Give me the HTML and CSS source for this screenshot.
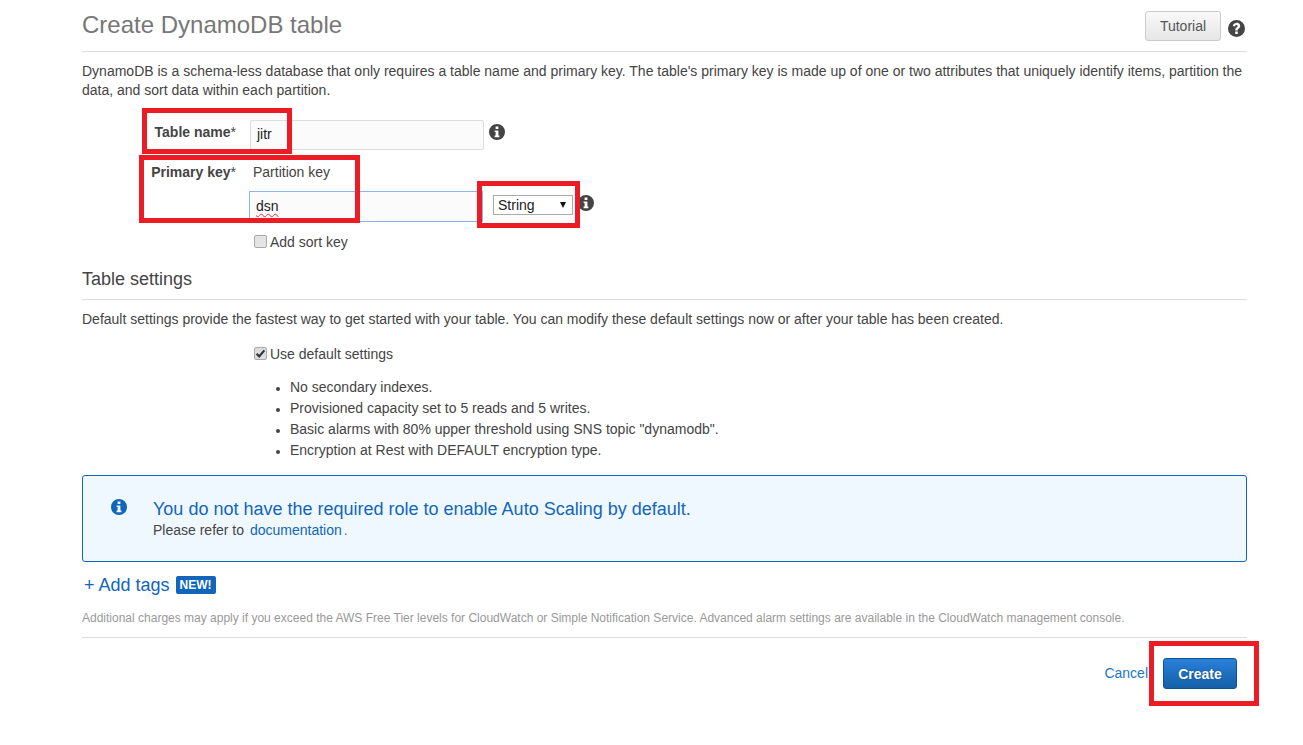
FILE: index.html
```html
<!DOCTYPE html>
<html lang="en">
<head>
<meta charset="utf-8">
<title>Create DynamoDB table</title>
<link rel="stylesheet" href="styles.css">
</head>
<body>
<svg class="sprites" width="0" height="0" aria-hidden="true">
  <symbol id="info" viewBox="0 0 16 16"><path fill-rule="evenodd" d="M8 0a8 8 0 1 1 0 16A8 8 0 0 1 8 0zM6.600 2.600v2.500h2.800V2.600zM5.600 6.400v1.700h1v3.300h-1v1.900h4.800v-1.900h-1V6.400z"/></symbol>
  <symbol id="help" viewBox="0 0 16 16"><path fill-rule="evenodd" d="M8 0a8 8 0 1 1 0 16A8 8 0 0 1 8 0zM6.800 10.900v2.300h2.400v-2.300zM8 2.800c-1.900 0-3.200 1-3.500 2.800l2.200.4c.1-.8.6-1.200 1.200-1.200.7 0 1.100.4 1.100 1 0 .5-.3.8-.9 1.300-.9.7-1.300 1.300-1.300 2.400v.3h2.300v-.2c0-.6.2-.9.9-1.400.9-.7 1.500-1.400 1.500-2.500 0-1.900-1.500-3.300-3.600-3.300z"/></symbol>
</svg>
<main class="page">
  <header class="title-bar">
    <h1 class="title">Create DynamoDB table</h1>
    <button class="btn-tutorial" type="button">Tutorial</button>
    <svg class="icon icon-help"><use href="#help"/></svg>
  </header>
  <p class="intro">DynamoDB is a schema-less database that only requires a table name and primary key. The table's primary key is made up of one or two attributes that uniquely identify items, partition the data, and sort data within each partition.</p>

  <section class="form">
    <div class="label label-name"><b>Table name</b>*</div>
    <div class="row-name">
      <div class="text-input">jitr</div>
      <svg class="icon"><use href="#info"/></svg>
    </div>
    <div class="label label-key"><b>Primary key</b>*</div>
    <div class="key-col">
      <div class="key-caption">Partition key</div>
      <div class="row-key">
        <div class="text-input focused"><span class="squiggle">dsn</span></div>
        <div class="select"><span>String</span><i class="caret"></i></div>
        <svg class="icon"><use href="#info"/></svg>
      </div>
      <label class="check sort-check"><span class="box"></span>Add sort key</label>
    </div>
  </section>

  <h2 class="section-title">Table settings</h2>
  <p class="settings-text">Default settings provide the fastest way to get started with your table. You can modify these default settings now or after your table has been created.</p>

  <div class="defaults">
    <label class="check"><span class="box checked"><svg viewBox="0 0 12 12"><path d="M1.800 6.200 4.600 9.200 10.200 2.600" fill="none" stroke="#333" stroke-width="2.400"/></svg></span>Use default settings</label>
    <ul class="default-list">
      <li>No secondary indexes.</li>
      <li>Provisioned capacity set to 5 reads and 5 writes.</li>
      <li>Basic alarms with 80% upper threshold using SNS topic "dynamodb".</li>
      <li>Encryption at Rest with DEFAULT encryption type.</li>
    </ul>
  </div>

  <div class="notice">
    <svg class="icon notice-icon"><use href="#info"/></svg>
    <div>
      <div class="notice-title">You do not have the required role to enable Auto Scaling by default.</div>
      <div class="notice-text">Please refer to <a class="link" href="#">documentation</a><span class="dot">.</span></div>
    </div>
  </div>

  <div class="tags"><a class="tags-link" href="#">+ Add tags</a><span class="badge">NEW!</span></div>
  <p class="charges">Additional charges may apply if you exceed the AWS Free Tier levels for CloudWatch or Simple Notification Service. Advanced alarm settings are available in the CloudWatch management console.</p>

  <footer class="actions">
    <a class="cancel" href="#">Cancel</a>
    <button class="btn-create" type="button">Create</button>
  </footer>
</main>
<div class="mark mark-1"></div>
<div class="mark mark-2"></div>
<div class="mark mark-3"></div>
<div class="mark mark-4"></div>
</body>
</html>
```

FILE: styles.css
```css
* { box-sizing: border-box; }
html, body { margin: 0; background: #fff; }
body {
  position: relative;
  height: 745px;
  overflow: hidden;
  font-family: "Liberation Sans", Arial, sans-serif;
  font-size: 14px;
  line-height: 19px;
  color: #444;
}
.sprites { position: absolute; }
.page { width: 1247px; padding: 10px 0 0 82px; }
.icon { width: 16px; height: 16px; fill: #444; flex: none; display: block; }

.title-bar {
  display: flex;
  align-items: center;
  height: 42px;
  padding-bottom: 11px;
  border-bottom: 1px solid #ddd;
}
.title { flex: 1; margin: 0; font-size: 24px; line-height: 30px; font-weight: 400; color: #777; }
.btn-tutorial {
  width: 76px;
  height: 30px;
  margin-top: 1px;
  padding: 0;
  border: 1px solid #ccc;
  border-radius: 3px;
  background: linear-gradient(#f9f9f9, #e6e6e6);
  font: 14px "Liberation Sans", Arial, sans-serif;
  color: #555;
}
.icon-help { width: 17px; height: 17px; margin: 7px 2px 0 7px; }

.intro { margin: 10px 0 0; }

.form {
  display: grid;
  grid-template-columns: 154px 1fr;
  column-gap: 14px;
  margin-top: 20px;
}
.label { text-align: right; color: #444; }
.label b { color: #444; }
.label-name { padding-top: 3px; }
.label-key { padding-top: 13px; }
.row-name { display: flex; align-items: center; gap: 5px; height: 30px; }
.text-input {
  width: 234px;
  height: 30px;
  padding: 4px 6px 0;
  border: 1px solid #ddd;
  border-radius: 2px;
  background: #fbfbfb;
  color: #222;
}
.row-name .icon { margin-top: -6px; }
.key-col { padding-top: 13px; }
.key-caption { padding-left: 3px; }
.row-key { display: flex; align-items: center; height: 32px; margin-top: 8px; margin-left: -1px; }
.text-input.focused { width: 234px; height: 31px; padding: 5px 6px 0; border: 1px solid #8fb2f0; border-radius: 0; }
.squiggle { text-decoration: underline wavy #d33; text-decoration-thickness: 1px; text-underline-offset: 2px; }
.select {
  display: flex;
  align-items: center;
  justify-content: space-between;
  width: 80px;
  height: 20px;
  margin: -2px 0 0 10px;
  padding: 0 6px 0 4px;
  border: 1px solid #aaa;
  background: #fff;
  color: #222;
}
.caret { width: 0; height: 0; border-left: 3.5px solid transparent; border-right: 3.5px solid transparent; border-top: 6px solid #111; }
.row-key .icon { margin: -7px 0 0 5px; }
.check { display: flex; align-items: center; color: #444; }
.box {
  display: block;
  width: 13px;
  height: 13px;
  margin: -3px 3px 0 0;
  border: 1px solid #aaa;
  border-radius: 2px;
  background: #e4e4e4;
}
.box svg { display: block; width: 100%; height: 100%; }
.box.checked { background: #ddd; }
.sort-check { margin: 11px 0 0 4px; }

.section-title {
  margin: 17px 0 0;
  padding-bottom: 9px;
  border-bottom: 1px solid #ddd;
  font-size: 18px;
  line-height: 21px;
  font-weight: 400;
  color: #444;
}
.settings-text { margin: 10px 0 0; }
.defaults { padding: 16px 0 0 172px; }
.default-list { margin: 13px 0 0; padding: 0 0 0 36px; }
.default-list li { height: 21px; line-height: 21px; }
.default-list li::marker { font-size: 12px; }

.notice {
  display: flex;
  height: 87px;
  margin-top: 14px;
  padding: 22px 0 0 28px;
  border: 1px solid #1166bb;
  border-radius: 3px;
  background: #f0f8ff;
}
.notice-icon { fill: #1166bb; margin: 1px 26px 0 0; }
.notice-title { font-size: 18px; line-height: 22px; color: #1166bb; }
.notice-text { line-height: 21px; }
.link { color: #1166bb; text-decoration: none; margin-left: 2px; }
.dot { margin-left: 2px; color: #777; }

.tags { display: flex; align-items: center; margin-top: 12px; padding-left: 2px; height: 22px; }
.tags-link { font-size: 18px; color: #1166bb; text-decoration: none; }
.badge {
  margin-left: 6px;
  padding: 0 4px;
  border-radius: 2px;
  background: #1166bb;
  color: #fff;
  font-size: 12px;
  font-weight: 700;
  line-height: 18px;
}
.charges { margin: 14px 0 0; padding-bottom: 11px; border-bottom: 1px solid #ddd; font-size: 12px; line-height: 16px; color: #999; }
.actions { display: flex; align-items: center; justify-content: flex-end; gap: 15px; margin-top: 20px; padding-right: 10px; }
.cancel { color: #2078c0; text-decoration: none; }
.btn-create {
  width: 74px;
  height: 31px;
  padding: 0;
  border: 1px solid #15508e;
  border-radius: 3px;
  background: linear-gradient(#2a80dc, #1560a8);
  color: #fff;
  font: 700 14px "Liberation Sans", Arial, sans-serif;
  text-shadow: 0 0 2px #0d4a86;
}

.mark { position: absolute; border: 5px solid #ed1c24; }
.mark-1 { left: 142px; top: 108px; width: 150px; height: 46px; }
.mark-2 { left: 139px; top: 155px; width: 221px; height: 68px; }
.mark-3 { left: 477px; top: 181px; width: 103px; height: 47px; }
.mark-4 { left: 1149px; top: 641px; width: 110px; height: 65px; }
```
